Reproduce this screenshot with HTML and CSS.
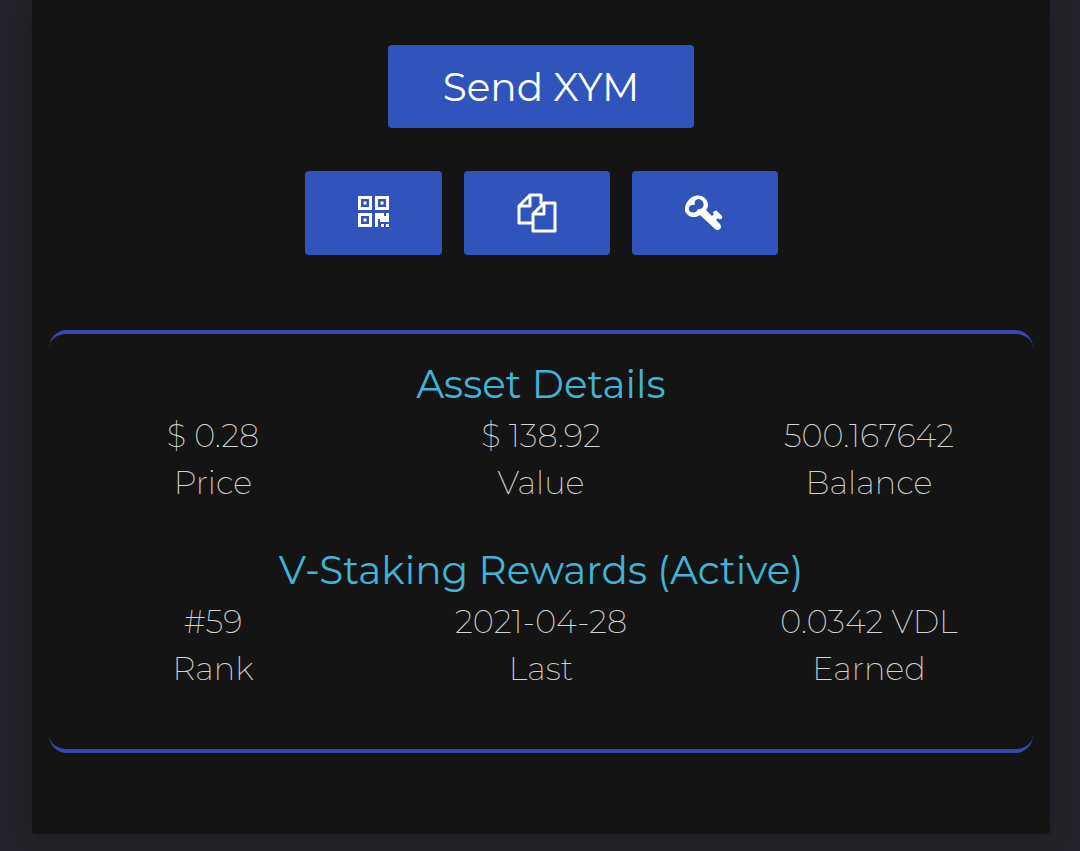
FILE: index.html
```html
<!doctype html>
<html lang="en">
<head>
    <meta charset="UTF-8">
    <meta name="viewport" content="width=device-width, initial-scale=1">
    <title>XYM Wallet</title>
    <link rel="stylesheet" href="styles.css">
</head>
<body>
    <main class="card">
        <div class="actions">
            <button type="button" class="btn btn-send">Send XYM</button>
        </div>
        <div class="actions tools">
            <button type="button" class="btn btn-icon" aria-label="Show QR code">
                <svg width="31" height="34" viewBox="0 0 31 34" fill="#fff">
                    <path fill-rule="evenodd" d="M0 0h14v14H0zM3 3v8h8V3zM17 0h14v14H17zM20 3v8h8V3zM0 17h14v14H0zM3 20v8h8v-8z"/>
                    <path d="M5.500 5.500h3v3h-3zM22.500 5.500h3v3h-3zM5.500 22.500h3v3h-3zM17 17h9v3h2v-3h3v9h-9v-3h-2v8h-3zM23 28h3v3h-3zM28 28h3v3h-3z"/>
                </svg>
            </button>
            <button type="button" class="btn btn-icon" aria-label="Copy address">
                <svg width="40" height="40" viewBox="0 0 40 40" fill="none" stroke="#fff" stroke-width="3" stroke-linejoin="round">
                    <path d="M15 30H2V13L13 2h11v9M13 2v11H2"/>
                    <path d="M27 10h11v28H16V21zM27 10v11H16"/>
                </svg>
            </button>
            <button type="button" class="btn btn-icon" aria-label="Show private key">
                <svg width="40" height="40" viewBox="0 0 40 40" fill="#fff">
                    <path fill-rule="evenodd" d="M10 3C17 1 23 6 23 12C23 14 22 16 21 17L27 23L29 21L28 20Q28 18 30 18Q31 17 32 18L37 23Q38 25 36 26Q34 27 33 25L31 27L35 31Q37 34 35 36Q32 38 30 36L15 22C10 26 2 24 0 18C-1 12 4 4 10 3ZM13 6C10 7 9 9 10 12C6 11 3 14 4 17C6 21 12 20 13 16C17 17 20 13 18 9C17 7 15 6 13 6Z"/>
                </svg>
            </button>
        </div>

        <div class="details">
            <section>
                <h2>Asset Details</h2>
                <dl class="stats">
                    <div><dt>Price</dt><dd>$ 0.28</dd></div>
                    <div><dt>Value</dt><dd>$ 138.92</dd></div>
                    <div><dt>Balance</dt><dd>500.167642</dd></div>
                </dl>
            </section>
            <section>
                <h2>V-Staking Rewards (Active)</h2>
                <dl class="stats">
                    <div><dt>Rank</dt><dd>#59</dd></div>
                    <div><dt>Last</dt><dd>2021-04-28</dd></div>
                    <div><dt>Earned</dt><dd>0.0342 VDL</dd></div>
                </dl>
            </section>
        </div>
    </main>
</body>
</html>
```

FILE: styles.css
```css
*{
    margin:0;
    padding:0;
    box-sizing:border-box;
}
body{
    background:#242329;
    color:#d4d4d4;
    font-family:Montserrat, Inter, sans-serif;
    font-size:32px;
    font-weight:200;
}
.card{
    margin:0 30px 17px 32px;
    padding:45px 17px 81px;
    background:#141414;
    border-radius:0 0 4px 4px;
    box-shadow:0 4px 24px rgba(0,0,0,.2);
}
.actions{
    display:flex;
    justify-content:center;
}
.tools{
    gap:22px;
    margin:43px 0 75px;
}
.btn{
    display:flex;
    align-items:center;
    justify-content:center;
    height:84px;
    padding:0 53px;
    border:0;
    border-radius:4px;
    background:#3054bc;
    color:#fff;
    font-family:inherit;
    font-size:39px;
    font-weight:400;
    cursor:pointer;
}
.btn-send{
    height:83px;
    padding:0 55px;
}
.btn:hover{
    background:#3a60cc;
}
.btn svg{
    display:block;
}
.details{
    display:grid;
    gap:36px;
    padding:22px 0 57px;
    border-top:4px solid #3848b0;
    border-bottom:4px solid #3848b0;
    border-radius:18px;
    text-align:center;
}
.details h2{
    color:#40b4d6;
    font-size:39px;
    font-weight:400;
    line-height:56px;
}
.stats{
    display:grid;
    grid-template-columns:repeat(3, 1fr);
    line-height:47px;
}
.stats div{
    display:flex;
    flex-direction:column-reverse;
}
```
